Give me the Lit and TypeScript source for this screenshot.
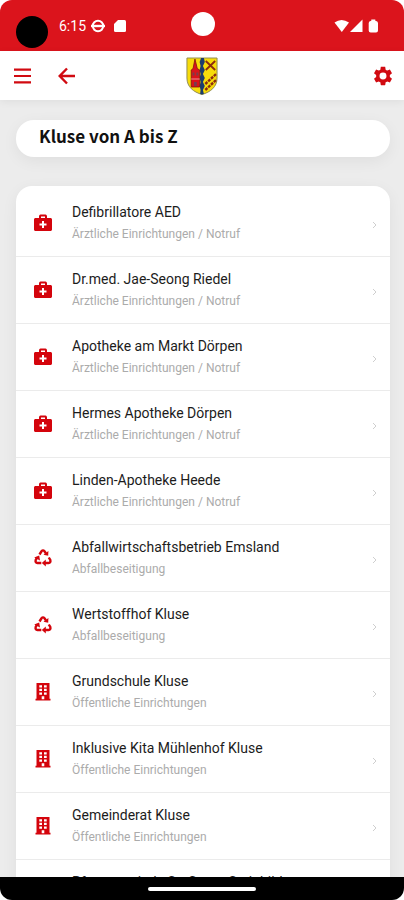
import { LitElement, html, css, svg } from "lit";
import { customElement } from "lit/decorators.js";

type Kind = "medical" | "recycle" | "building";
interface Entry {
  title: string;
  category: string;
  kind: Kind;
}

const MEDICAL = "Ärztliche Einrichtungen / Notruf";
const WASTE = "Abfallbeseitigung";
const PUBLIC = "Öffentliche Einrichtungen";

const ENTRIES: Entry[] = [
  { title: "Defibrillatore AED", category: MEDICAL, kind: "medical" },
  { title: "Dr.med. Jae-Seong Riedel", category: MEDICAL, kind: "medical" },
  { title: "Apotheke am Markt Dörpen", category: MEDICAL, kind: "medical" },
  { title: "Hermes Apotheke Dörpen", category: MEDICAL, kind: "medical" },
  { title: "Linden-Apotheke Heede", category: MEDICAL, kind: "medical" },
  { title: "Abfallwirtschaftsbetrieb Emsland", category: WASTE, kind: "recycle" },
  { title: "Wertstoffhof Kluse", category: WASTE, kind: "recycle" },
  { title: "Grundschule Kluse", category: PUBLIC, kind: "building" },
  { title: "Inklusive Kita Mühlenhof Kluse", category: PUBLIC, kind: "building" },
  { title: "Gemeinderat Kluse", category: PUBLIC, kind: "building" },
  { title: "Pfarrgemeinde St. Georg Steinbild", category: PUBLIC, kind: "building" },
];

const SHAPES = {
  medical: svg`
    <path fill-rule="evenodd" d="M5 4V2.500C5 1.500 5.500 .5 6.500 .5h5c1 0 1.500 1 1.500 2V4h3.500c.8 0 1.500.7 1.500 1.500v10c0 .8-.7 1.500-1.500 1.500h-15C.7 17 0 16.300 0 15.500v-10C0 4.700.7 4 1.500 4zM7 4h4V2.500H7zM8 7v2.500H5.500v2H8V14h2v-2.500h2.500v-2H10V7z"/>`,
  recycle: svg`
    <g fill="none" stroke="currentColor" stroke-width="2.400">
      <path d="M5.500 5.500 7.500 2.300Q9 .5 10.500 2.300L12 4.500"/>
      <path d="M14.800 8.500 16.300 11Q17 13.800 14.500 14H10.500"/>
      <path d="M7.300 14H3.500Q1 13.800 1.700 11L3.200 8.300"/>
    </g>
    <path d="M9.500 5.800 14.200 6.800 14.400 2zM11.800 10.600v6.800L7.800 14zM.2 8.400 5.200 6.600 6 11.400z"/>`,
  building: svg`
    <path fill-rule="evenodd" d="M2.500 0h13v15.800h1V17.500h-15v-1.700h1zM5.300 2.200v2.300h2.700V2.200zM10 2.200v2.300h2.700V2.200zM5.300 5.800v2.300h2.700V5.800zM10 5.800v2.300h2.700V5.800zM5.300 9.400v2.300h2.700V9.400zM10 9.400v2.300h2.700V9.400zM7.700 13.300v3h2.600v-3z"/>`,
};

@customElement("status-bar")
class StatusBar extends LitElement {
  static styles = css`
    :host { display: block; flex: none; }
    .bar {
      position: relative;
      display: flex;
      align-items: center;
      height: 51px;
      padding: 0 24px 0 16px;
      box-sizing: border-box;
      background: #db141c;
      color: #fff;
      border-radius: 12px 12px 0 0;
    }
    .lens { width: 32px; height: 32px; margin-top: 12px; border-radius: 50%; background: #000; }
    .time { margin: 0 5px 0 11px; font-size: 14px; line-height: 20px; }
    .left { margin-right: 9px; }
    .push { margin-left: auto; }
    .camera {
      position: absolute;
      left: 50%;
      top: 12px;
      width: 24px;
      height: 24px;
      margin-left: -11px;
      border-radius: 50%;
      background: #fff;
    }
    svg { display: block; fill: currentColor; }
  `;
  render() {
    return html`<div class="bar">
      <span class="lens"></span>
      <span class="time">6:15</span>
      <svg class="left" width="14" height="14" viewBox="0 0 14 14" aria-hidden="true">
        <circle cx="7" cy="7" r="5.200" fill="none" stroke="currentColor" stroke-width="2" />
        <path d="M0 5.800h14v2.400H0z" />
      </svg>
      <svg width="12" height="14" viewBox="0 0 12 14" aria-hidden="true">
        <path d="M4 1h6.500Q12 1 12 2.500v9Q12 13 10.500 13h-9Q0 13 0 11.500V5z" />
      </svg>
      <span class="camera"></span>
      <svg class="push" width="46" height="16" viewBox="0 0 46 16" aria-hidden="true">
        <path d="M.5 4.500Q7.500 -.5 15 4.500L7.800 14z" />
        <path d="M28.500 1.500V14H16z" />
        <path d="M37.300 1.500h4v1.200q2.700.3 2.700 2.300V12.500Q44 14.500 42 14.500h-5.300Q34.700 14.500 34.700 12.500V5q0-2 2.600-2.300z" />
      </svg>
    </div>`;
  }
}

@customElement("app-header")
class AppHeader extends LitElement {
  static styles = css`
    :host { display: block; flex: none; position: relative; z-index: 1; }
    .bar {
      display: grid;
      grid-template-columns: 1fr auto 1fr;
      align-items: center;
      height: 49px;
      padding: 0 10px;
      box-sizing: border-box;
      background: #fff;
      color: #d10a11;
      box-shadow: 0 2px 8px rgba(0, 0, 0, 0.06);
    }
    .start { display: flex; gap: 20px; }
    .end { justify-self: end; }
    button {
      display: block;
      padding: 2px;
      border: 0;
      background: none;
      color: inherit;
    }
    .end { padding: 0; }
    svg { display: block; }
  `;
  render() {
    return html`<header class="bar">
      <div class="start">
        <button aria-label="Menü">
          <svg width="20" height="20" viewBox="0 0 20 20" fill="none" stroke="currentColor" stroke-width="2.200">
            <path d="M2 3.700h17M2 10h17M2 16.300h17" />
          </svg>
        </button>
        <button aria-label="Zurück">
          <svg width="20" height="20" viewBox="0 0 20 20" fill="none" stroke="currentColor" stroke-width="2.400">
            <path d="M19 10H4M11 2.500 3.700 10l7.300 7.500" />
          </svg>
        </button>
      </div>
      <svg width="32" height="38" viewBox="0 0 34 38" preserveAspectRatio="none" role="img" aria-label="Wappen Kluse">
        <path d="M1 1h32v20c0 9-7 14-16 16.500C8 35 1 30 1 21z" fill="#f7dc0a" stroke="#8f8a55" />
        <path d="M16 1h3l1 4-2 4 2 4-2 4 2 4-2 4 2 4-2 4 1 4-2 .5-2-.500.500-4-1-4 1-4-1-4 1-4-1-4 1-4-1-4z" fill="#1c3c6e" />
        <path d="M9.500 2 12 11.500 14.500 13V30H5.500V13L7.500 11.500z" fill="#d8141c" stroke="#7d1410" stroke-width=".8" />
        <path d="M7 15.500h2v3H7zM11 15.500h2v3h-2zM8.500 25h3v4h-3z" fill="#7a3d4c" />
        <path d="M5.500 22h9" stroke="#f2929a" />
        <g fill="none" stroke="#8c2a10" stroke-width="2">
          <path d="m21 4 10 9M31 4 21 13" />
          <path d="M20.500 27 32 17" stroke-width="2.500" stroke-dasharray="3 1" />
          <path d="M20.500 33 32 23" stroke-width="2.500" stroke-dasharray="3 1" />
        </g>
      </svg>
      <button class="end" aria-label="Einstellungen">
        <svg width="22" height="22" viewBox="0 0 24 24" fill="currentColor">
          <path fill-rule="evenodd" d="M19.430 12.980c.04-.32.070-.64.070-.98s-.03-.66-.07-.98l2.110-1.650c.19-.15.240-.42.120-.64l-2-3.460c-.12-.22-.39-.3-.61-.22l-2.490 1c-.52-.4-1.080-.73-1.690-.98l-.38-2.650C14.460 2.180 14.250 2 14 2h-4c-.25 0-.46.180-.49.420l-.38 2.650c-.61.250-1.170.59-1.690.98l-2.490-1c-.23-.09-.49 0-.61.220l-2 3.460c-.13.220-.07.490.120.640l2.110 1.650c-.04.320-.07.650-.07.980s.03.660.07.980l-2.110 1.650c-.19.150-.24.420-.12.640l2 3.460c.12.220.39.300.61.220l2.490-1c.52.400 1.080.73 1.690.98l.38 2.650c.03.240.24.420.49.420h4c.25 0 .46-.18.490-.42l.38-2.650c.61-.25 1.170-.59 1.690-.98l2.490 1c.23.090.49 0 .61-.22l2-3.460c.12-.22.070-.49-.12-.64zM12 15.800A3.800 3.800 0 1 1 12 8.200a3.800 3.800 0 0 1 0 7.600z" />
        </svg>
      </button>
    </header>`;
  }
}

@customElement("app-root")
class AppRoot extends LitElement {
  static styles = css`
    :host {
      display: flex;
      flex-direction: column;
      height: 100vh;
      background: #fff;
      font-family: Roboto, "Liberation Sans", sans-serif;
    }
    .content {
      flex: 1;
      min-height: 0;
      overflow: hidden;
      padding: 20px 14px 0 16px;
      background: #ececec;
    }
    .title {
      margin: 0 0 29px;
      padding: 4px 23px 9px;
      background: #fff;
      border-radius: 18px;
      box-shadow: 0 4px 16px rgba(0, 0, 0, 0.06);
      font: 700 17px/24px "Noto Sans CJK SC", "Noto Sans", sans-serif;
      color: #111;
    }
    .list {
      margin: 0;
      padding: 4px 0 0;
      list-style: none;
      background: #fff;
      border-radius: 16px;
      box-shadow: 0 4px 16px rgba(0, 0, 0, 0.06);
    }
    .row {
      display: flex;
      align-items: center;
      height: 67px;
      padding: 0 10px 0 18px;
      box-sizing: border-box;
      border-bottom: 1px solid #ebebeb;
      color: #1c1c1c;
      text-decoration: none;
    }
    .icon { flex: none; width: 18px; height: 18px; margin-right: 20px; fill: currentColor; color: #d4040c; }
    .text { flex: 1; min-width: 0; white-space: nowrap; }
    .name { display: block; font-size: 14px; line-height: 22px; }
    .category { display: block; font-size: 12px; line-height: 22px; color: #ababab; }
    .chevron { flex: none; width: 10px; height: 10px; margin-top: 4px; fill: none; stroke: #cfcfcf; }
    .nav {
      display: flex;
      flex: none;
      align-items: center;
      justify-content: center;
      height: 23px;
      background: #000;
      border-radius: 0 0 12px 12px;
    }
    .handle { width: 108px; height: 4px; border-radius: 2px; background: #fff; }
  `;
  render() {
    return html`
      <status-bar></status-bar>
      <app-header></app-header>
      <main class="content">
        <h1 class="title">Kluse von A bis Z</h1>
        <ul class="list">
          ${ENTRIES.map(
            (e) => html`<li>
              <a class="row" href="#">
                <svg class="icon" viewBox="0 0 18 18" aria-hidden="true">${SHAPES[e.kind]}</svg>
                <span class="text">
                  <span class="name">${e.title}</span>
                  <span class="category">${e.category}</span>
                </span>
                <svg class="chevron" viewBox="0 0 10 10" aria-hidden="true"><path d="m3 2 3 3-3 3" /></svg>
              </a>
            </li>`
          )}
        </ul>
      </main>
      <div class="nav"><span class="handle"></span></div>
    `;
  }
}
